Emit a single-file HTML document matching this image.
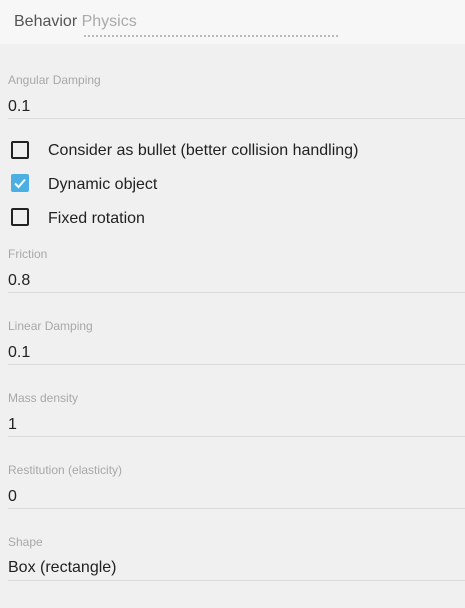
<html><head><style>
body{margin:0;width:465px;height:608px;background:#f0f0f0;font-family:"Liberation Sans",sans-serif;position:relative;overflow:hidden}
.hd{position:absolute;left:0;top:0;width:465px;height:44px;background:#f7f7f7}
.t{position:absolute;white-space:nowrap}
.lb{font-size:12px;color:#a8a8a8;left:8px}
.v{font-size:16px;color:#222;left:8px}
.ln{position:absolute;left:8px;right:0;height:1px;background:#dcdcdc}
.cb{position:absolute;left:11px;width:14px;height:14px;border:2px solid #222;border-radius:2px}
.ck{position:absolute;left:11px;width:18px;height:18px;background:#4ab0e4;border-radius:2px}
.cl{font-size:16px;color:#222;left:48px}
</style></head><body>
<div class="hd"></div>
<div class="t" style="left:14px;top:13px;font-size:16px;color:#555">Behavior <span style="color:#aaa">Physics</span></div>
<div style="position:absolute;left:84px;top:35px;width:254px;border-top:2px dotted #bbb"></div>

<div class="t lb" style="top:73px">Angular Damping</div>
<div class="t v" style="top:98px">0.1</div>
<div class="ln" style="top:118px"></div>

<div class="cb" style="top:141px"></div><div class="t cl" style="top:142px">Consider as bullet (better collision handling)</div>
<div class="ck" style="top:174px"><svg width="18" height="18"><path d="M4 9.5 L7.5 13 L14 5.5" stroke="#fff" stroke-width="2" fill="none"/></svg></div><div class="t cl" style="top:176px">Dynamic object</div>
<div class="cb" style="top:208px"></div><div class="t cl" style="top:210px">Fixed rotation</div>

<div class="t lb" style="top:247px">Friction</div>
<div class="t v" style="top:272px">0.8</div>
<div class="ln" style="top:292px"></div>

<div class="t lb" style="top:319px">Linear Damping</div>
<div class="t v" style="top:344px">0.1</div>
<div class="ln" style="top:364px"></div>

<div class="t lb" style="top:391px">Mass density</div>
<div class="t v" style="top:416px">1</div>
<div class="ln" style="top:436px"></div>

<div class="t lb" style="top:463px">Restitution (elasticity)</div>
<div class="t v" style="top:488px">0</div>
<div class="ln" style="top:508px"></div>

<div class="t lb" style="top:535px">Shape</div>
<div class="t v" style="top:559px">Box (rectangle)</div>
<div class="ln" style="top:580px"></div>
</body></html>
